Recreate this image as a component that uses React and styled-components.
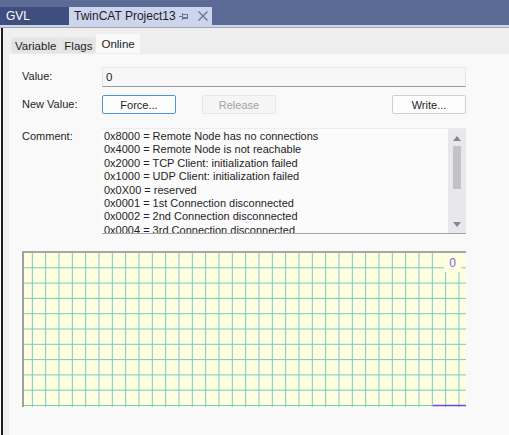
import React from "react";
import styled, { createGlobalStyle } from "styled-components";

const GlobalStyle = createGlobalStyle`
  html, body { margin: 0; padding: 0; background: #f9f9f9; }
  body { font-family: "Liberation Sans", Arial, sans-serif; }
`;

const Window = styled.div`
  width: 509px;
  height: 435px;
  display: flex;
  flex-direction: column;
  overflow: hidden;
  background: #f9f9f9;
`;

const TitleBar = styled.div`
  height: 25px;
  flex: none;
  background: #5c6a96;
  display: flex;
  align-items: flex-end;
`;

const DocTab = styled.div`
  height: 18px;
  width: ${(p) => p.$w}px;
  box-sizing: border-box;
  padding-left: ${(p) => p.$pl}px;
  display: flex;
  align-items: center;
  background: ${(p) => (p.$active ? "#cdd4ee" : "#3e4e7e")};
  color: ${(p) => (p.$active ? "#1e1e1e" : "#ffffff")};
  font-family: "Liberation Sans", Arial, sans-serif;
  font-size: 12px;
`;

const DocTitle = styled.span`
  flex: 1;
  white-space: nowrap;
`;

const TabIcon = styled.svg`
  flex: none;
  margin-right: ${(p) => p.$mr}px;
`;

const LavenderStrip = styled.div`
  height: 2px;
  flex: none;
  background: #cdd4ee;
  border-bottom: 1px solid #a6a6a6;
`;

const Body = styled.div`
  flex: 1;
  display: flex;
  flex-direction: column;
  margin-left: 1px;
  border-left: 2px solid #1c1c1c;
  background: #efefef;
  padding-left: 6px;
  min-height: 0;
`;

const TabStrip = styled.div`
  height: 25px;
  flex: none;
  display: flex;
  align-items: flex-end;
  padding-left: 2px;
`;

const Tab = styled.div`
  height: ${(p) => (p.$selected ? 19 : 16)}px;
  box-sizing: border-box;
  padding: 0 ${(p) => (p.$selected ? 4 : 3)}px;
  display: flex;
  align-items: center;
  background: ${(p) => (p.$selected ? "#f9f9f9" : "#e4e4e4")};
  border: 1px solid ${(p) => (p.$selected ? "#f9f9f9" : "#e9e9e9")};
  border-bottom: none;
  font-family: "Liberation Sans", Arial, sans-serif;
  font-size: 11.5px;
  color: #1e1e1e;
`;

const Page = styled.div`
  flex: 1;
  background: #f9f9f9;
  border-top: 1px solid #ececec;
  padding: 13px 0 0 13px;
  display: grid;
  grid-template-columns: 80px 364px;
  align-content: start;
  font-family: "Liberation Sans", Arial, sans-serif;
  font-size: 11px;
  color: #1e1e1e;
`;

const Label = styled.div`
  display: flex;
  align-items: ${(p) => (p.$top ? "flex-start" : "center")};
  padding-top: ${(p) => (p.$top ? 1 : 0)}px;
  margin-top: ${(p) => p.$mt || 0}px;
  line-height: 13.4px;
`;

const ValueField = styled.div`
  height: 20px;
  box-sizing: border-box;
  border: 1px solid #e6e6e6;
  border-bottom: 1px solid #9c9c9c;
  background: #f7f7f7;
  display: flex;
  align-items: center;
  padding-left: 3px;
  font-size: 11.5px;
`;

const ButtonRow = styled.div`
  display: flex;
  align-items: center;
  gap: 26px;
  margin-top: 8px;
`;

const Button = styled.div`
  width: 74px;
  height: 19px;
  box-sizing: border-box;
  border-radius: 2px;
  display: flex;
  align-items: center;
  justify-content: center;
  font-size: 11px;
  margin-left: ${(p) => (p.$push ? "auto" : "0")};
  background: ${(p) => (p.$disabled ? "#f5f5f5" : "#fdfdfd")};
  color: ${(p) => (p.$disabled ? "#a2a2a2" : "#1e1e1e")};
  border: 1px solid
    ${(p) => (p.$focus ? "#4f95d6" : p.$disabled ? "#e6e6e6" : "#cfcfcf")};
`;

const CommentBox = styled.div`
  margin-top: 14px;
  height: 106px;
  box-sizing: border-box;
  border-top: 1px solid #ececec;
  border-bottom: 1px solid #a4a4a4;
  background: #fbfbfb;
  display: flex;
  overflow: hidden;
`;

const CommentText = styled.div`
  flex: 1;
  padding: 1px 0 0 2px;
  line-height: 13.4px;
  white-space: nowrap;
  overflow: hidden;
`;

const ScrollBar = styled.div`
  width: 18px;
  flex: none;
  background: #e8e8ec;
  display: flex;
  flex-direction: column;
  align-items: center;
  padding: 7px 0 6px;
  box-sizing: border-box;
`;

const Thumb = styled.div`
  width: 8px;
  height: 43px;
  margin-top: 5px;
  background: #c2c3c9;
`;

const Spacer = styled.div`
  flex: 1;
`;

const ChartFrame = styled.div`
  grid-column: 1 / 3;
  margin-top: 17px;
  width: 444px;
  height: 156px;
  box-sizing: border-box;
  border-top: 2px solid #a6a6a6;
  border-left: 2px solid #a0a0a0;
  background: #ffffe0;
  position: relative;
`;

const ChartSvg = styled.svg`
  display: block;
`;

const AxisValue = styled.div`
  position: absolute;
  top: 0;
  right: 5px;
  width: 17px;
  height: 19px;
  background: #ffffe0;
  color: #7a5cf0;
  font-size: 12px;
  display: flex;
  align-items: center;
  justify-content: center;
`;

const lines = [
  "0x8000 = Remote Node has no connections",
  "0x4000 = Remote Node is not reachable",
  "0x2000 = TCP Client: initialization failed",
  "0x1000 = UDP Client: initialization failed",
  "0x0X00 = reserved",
  "0x0001 = 1st Connection disconnected",
  "0x0002 = 2nd Connection disconnected",
  "0x0004 = 3rd Connection disconnected",
];

function Grid() {
  const W = 442;
  const H = 154;
  const vx = [];
  for (let k = 0; k <= 32; k++) vx.push(8.33 + 13.333 * k);
  const hy = [];
  for (let k = 1; k <= 10; k++) hy.push(15.3 * k - 0.5);
  return (
    <ChartSvg width={W} height={H} viewBox={`0 0 ${W} ${H}`}>
      {vx.map((x, i) => (
        <line key={"v" + i} x1={x} y1={0} x2={x} y2={H} stroke="#74cbc6" strokeWidth="1" />
      ))}
      {hy.map((y, i) => (
        <line key={"h" + i} x1={0} y1={y} x2={W} y2={y} stroke="#74cbc6" strokeWidth="1" />
      ))}
      <line x1={409} y1={152.5} x2={W} y2={152.5} stroke="#6a45f2" strokeWidth="1.6" />
    </ChartSvg>
  );
}

export default function App() {
  return (
    <Window>
      <GlobalStyle />
      <TitleBar>
        <DocTab $w={69} $pl={6}>
          <DocTitle>GVL</DocTitle>
        </DocTab>
        <DocTab $w={143} $pl={5} $active>
          <DocTitle>TwinCAT Project13</DocTitle>
          <TabIcon width="11" height="9" viewBox="0 0 11 9" $mr={8}>
            <g fill="none" stroke="#6b7596" strokeWidth="1">
              <line x1="0" y1="4.5" x2="3.5" y2="4.5" />
              <line x1="3.5" y1="1" x2="3.5" y2="8" />
              <rect x="3.5" y="2.5" width="5" height="4" />
              <line x1="3.5" y1="5.5" x2="8.5" y2="5.5" />
            </g>
          </TabIcon>
          <TabIcon width="10" height="10" viewBox="0 0 10 10" $mr={4}>
            <g stroke="#6b7596" strokeWidth="1.3" strokeLinecap="square">
              <line x1="1" y1="1" x2="9" y2="9" />
              <line x1="9" y1="1" x2="1" y2="9" />
            </g>
          </TabIcon>
        </DocTab>
      </TitleBar>
      <LavenderStrip />
      <Body>
        <TabStrip>
          <Tab>Variable</Tab>
          <Tab>Flags</Tab>
          <Tab $selected>Online</Tab>
        </TabStrip>
        <Page>
          <Label>Value:</Label>
          <ValueField>0</ValueField>

          <Label $mt={8}>New Value:</Label>
          <ButtonRow>
            <Button $focus>Force...</Button>
            <Button $disabled>Release</Button>
            <Button $push>Write...</Button>
          </ButtonRow>

          <Label $top $mt={15}>Comment:</Label>
          <CommentBox>
            <CommentText>
              {lines.map((l) => (
                <div key={l}>{l}</div>
              ))}
            </CommentText>
            <ScrollBar>
              <svg width="8" height="5" viewBox="0 0 8 5">
                <polygon points="0,5 8,5 4,0" fill="#868690" />
              </svg>
              <Thumb />
              <Spacer />
              <svg width="8" height="5" viewBox="0 0 8 5">
                <polygon points="0,0 8,0 4,5" fill="#868690" />
              </svg>
            </ScrollBar>
          </CommentBox>

          <ChartFrame>
            <Grid />
            <AxisValue>0</AxisValue>
          </ChartFrame>
        </Page>
      </Body>
    </Window>
  );
}
